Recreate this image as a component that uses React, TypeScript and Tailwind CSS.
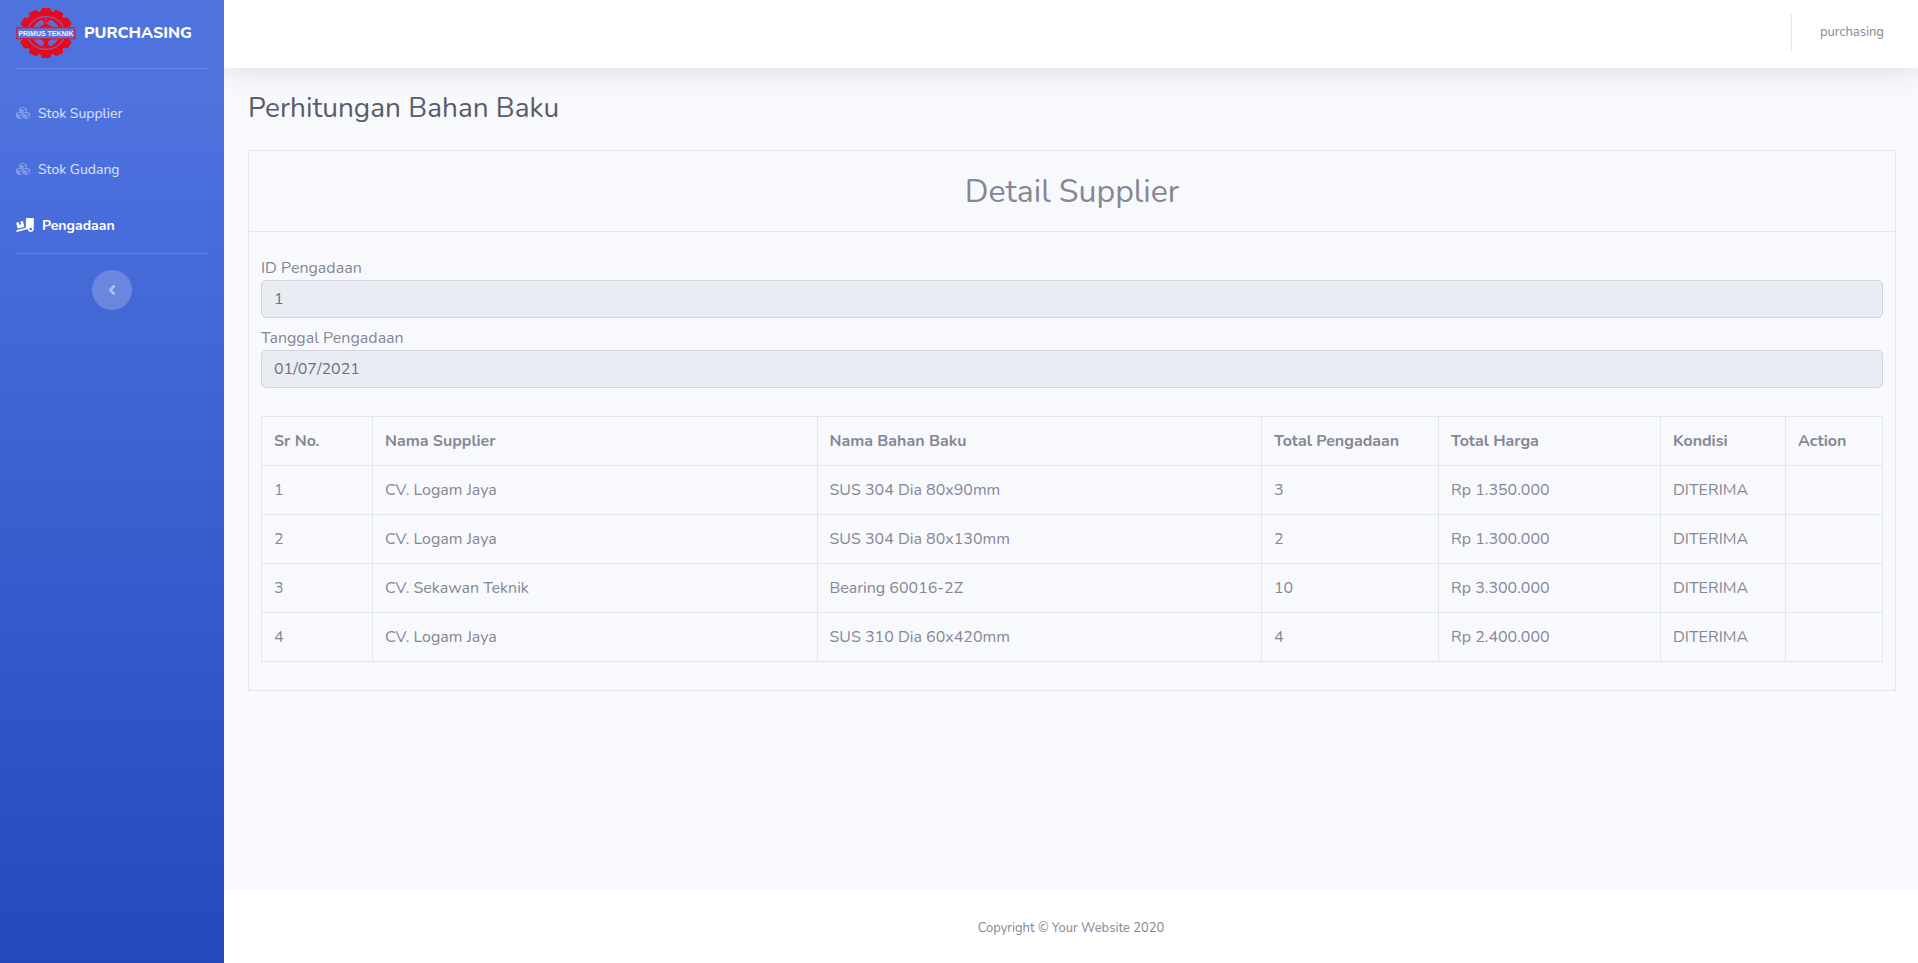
import { FaAngleLeft, FaCubes, FaTruckLoading } from 'react-icons/fa';

const TEETH = [0, 30, 60, 90, 120, 150, 180, 210, 240, 270, 300, 330];

const rows = [
  { no: 1, supplier: 'CV. Logam Jaya', material: 'SUS 304 Dia 80x90mm', qty: 3, price: 'Rp 1.350.000', status: 'DITERIMA' },
  { no: 2, supplier: 'CV. Logam Jaya', material: 'SUS 304 Dia 80x130mm', qty: 2, price: 'Rp 1.300.000', status: 'DITERIMA' },
  { no: 3, supplier: 'CV. Sekawan Teknik', material: 'Bearing 60016-2Z', qty: 10, price: 'Rp 3.300.000', status: 'DITERIMA' },
  { no: 4, supplier: 'CV. Logam Jaya', material: 'SUS 310 Dia 60x420mm', qty: 4, price: 'Rp 2.400.000', status: 'DITERIMA' },
];

const columns = [
  { label: 'Sr No.', width: 'w-[111px]' },
  { label: 'Nama Supplier', width: '' },
  { label: 'Nama Bahan Baku', width: '' },
  { label: 'Total Pengadaan', width: 'w-[177px]' },
  { label: 'Total Harga', width: 'w-[222px]' },
  { label: 'Kondisi', width: 'w-[125px]' },
  { label: 'Action', width: 'w-[97px]' },
];

function Logo() {
  return (
    <svg viewBox="0 0 60 50" className="h-[50px] w-[60px] shrink-0" role="img" aria-label="Primus Teknik">
      <g fill="#e60a1e" transform="translate(30 25) scale(1.1 1)">
        <circle r="22" />
        {TEETH.map((a) => (
          <path key={a} d="M-5.2 -21 L-3.6 -24.9 L3.6 -24.9 L5.2 -21 Z" transform={`rotate(${a})`} />
        ))}
      </g>
      <ellipse cx="30" cy="25" rx="18.6" ry="16.4" fill="none" stroke="#8a62b4" strokeWidth="1.1" />
      <path d="M17 19.5 Q20.5 14 25.5 11.8 L27.8 13.4 V16.5 L22.5 19.5 Z" fill="#5f6cd2" />
      <path d="M43 19.5 Q39.5 14 34.5 11.8 L32.2 13.4 V16.5 L37.5 19.5 Z" fill="#5f6cd2" />
      <path d="M17 30.5 Q20.5 36 25.5 38.2 L27.8 36.6 V33.5 L22.5 30.5 Z" fill="#5f6cd2" />
      <path d="M43 30.5 Q39.5 36 34.5 38.2 L32.2 36.6 V33.5 L37.5 30.5 Z" fill="#5f6cd2" />
      <path d="M30 9.5 V15.5 H31.5" fill="none" stroke="#8a62b4" strokeWidth="0.9" />
      <rect x="0.8" y="19.6" width="58" height="11" fill="#5b72d8" stroke="#c0244f" strokeWidth="1.4" />
      <text x="30" y="27.6" textAnchor="middle" fontSize="7" fontWeight="700" fill="#eef1ff" fontFamily="'Liberation Sans', sans-serif">
        PRIMUS TEKNIK
      </text>
    </svg>
  );
}

function Sidebar() {
  return (
    <aside className="flex w-56 shrink-0 flex-col bg-[linear-gradient(180deg,#4e73df_10%,#224abe_100%)] text-white">
      <a href="#" className="flex h-[68px] items-center gap-2 pb-[2px] pl-4 text-base font-extrabold">
        <Logo />
        <span>PURCHASING</span>
      </a>
      <hr className="mx-4 border-white/15" />
      <nav className="pt-4">
        <a href="#" className="flex h-14 items-center gap-2 px-4 text-sm text-white/80">
          <FaCubes className="h-[14px] w-[14px] text-white/30" />
          <span className="pt-0.5">Stok Supplier</span>
        </a>
        <a href="#" className="flex h-14 items-center gap-2 px-4 text-sm text-white/80">
          <FaCubes className="h-[14px] w-[14px] text-white/30" />
          <span className="pt-0.5">Stok Gudang</span>
        </a>
        <a href="#" aria-current="page" className="flex h-14 items-center gap-2 px-4 text-sm font-bold text-white">
          <FaTruckLoading className="h-[14px] w-[18px]" />
          <span className="pt-0.5">Pengadaan</span>
        </a>
      </nav>
      <hr className="mx-4 border-white/15" />
      <button type="button" aria-label="Toggle sidebar" className="mx-auto mt-4 flex h-10 w-10 items-center justify-center rounded-full bg-white/20 text-white/50">
        <FaAngleLeft className="h-4 w-4" />
      </button>
    </aside>
  );
}

function ReadonlyField({ id, label, value }: { id: string; label: string; value: string }) {
  return (
    <div className="flex flex-col">
      <label htmlFor={id}>{label}</label>
      <input
        id={id}
        type="text"
        readOnly
        value={value}
        className="h-[38px] w-full rounded-[5px] border border-[#d1d3e2] bg-[#eaecf4] px-3 text-[#6e707e]"
      />
    </div>
  );
}

export default function App() {
  return (
    <div className="flex min-h-screen bg-white font-['Nunito','Noto_Sans',sans-serif] text-base text-[#858796]">
      <Sidebar />
      <div className="flex min-w-0 flex-1 flex-col overflow-hidden bg-[#f8f9fc]">
        <header className="flex h-[68px] items-center justify-end bg-white pr-[34px] pb-[2px] shadow-[0_2px_28px_0_rgba(58,59,69,0.15)]">
          <div className="h-[38px] w-px bg-[#e3e6f0]" />
          <a href="#" className="ml-7 text-[13px]">purchasing</a>
        </header>

        <main className="flex-1 pt-6 pr-[22px] pb-6 pl-6">
          <h1 className="mb-[26px] text-[28px] leading-8 text-[#5a5c69]">Perhitungan Bahan Baku</h1>

          <section className="border border-[#e3e6f0]">
            <h2 className="border-b border-[#e3e6f0] pt-[21px] pb-[19px] text-center text-[32px] leading-10">Detail Supplier</h2>
            <div className="px-3 pt-6 pb-7">
              <div className="flex flex-col gap-2">
                <ReadonlyField id="id-pengadaan" label="ID Pengadaan" value="1" />
                <ReadonlyField id="tanggal-pengadaan" label="Tanggal Pengadaan" value="01/07/2021" />
              </div>
              <table className="mt-7 w-full table-fixed border-collapse text-left">
                <thead>
                  <tr>
                    {columns.map((c) => (
                      <th key={c.label} scope="col" className={`border border-[#e3e6f0] p-3 font-bold ${c.width}`}>
                        {c.label}
                      </th>
                    ))}
                  </tr>
                </thead>
                <tbody>
                  {rows.map((r) => (
                    <tr key={r.no}>
                      <td className="border border-[#e3e6f0] p-3">{r.no}</td>
                      <td className="border border-[#e3e6f0] p-3">{r.supplier}</td>
                      <td className="border border-[#e3e6f0] p-3">{r.material}</td>
                      <td className="border border-[#e3e6f0] p-3">{r.qty}</td>
                      <td className="border border-[#e3e6f0] p-3">{r.price}</td>
                      <td className="border border-[#e3e6f0] p-3">{r.status}</td>
                      <td className="border border-[#e3e6f0] p-3" />
                    </tr>
                  ))}
                </tbody>
              </table>
            </div>
          </section>
        </main>

        <footer className="bg-white pt-[30px] pb-[26px] text-center text-[13px] leading-[17px]">Copyright © Your Website 2020</footer>
      </div>
    </div>
  );
}
